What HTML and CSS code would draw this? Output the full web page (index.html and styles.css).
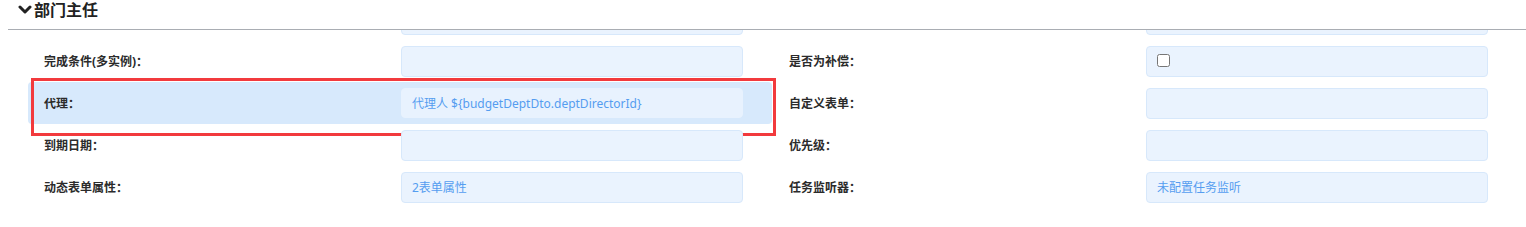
FILE: index.html
```html
<!DOCTYPE html>
<html lang="zh-CN">
<head>
    <meta charset="UTF-8">
    <title>部门主任</title>
    <link rel="stylesheet" href="styles.css">
</head>
<body>

    <div class="panel">
        <div class="panel-title">
            <svg class="chevron" width="14" height="10" viewBox="0 0 14 10">
                <polyline points="2,2 7,7 12,2" fill="none" stroke="#222" stroke-width="3" stroke-linecap="round" stroke-linejoin="round"/>
            </svg>
            <span>部门主任</span>
        </div>

        <div class="panel-body">
            <div class="form-grid">
                <!-- row scrolled under the title -->
                <div class="field">
                    <label class="field-label"></label>
                    <div class="field-input"></div>
                </div>
                <div class="field">
                    <label class="field-label"></label>
                    <div class="field-input"></div>
                </div>

                <div class="field">
                    <label class="field-label">完成条件(多实例)<span class="colon">：</span></label>
                    <div class="field-input"></div>
                </div>
                <div class="field">
                    <label class="field-label">是否为补偿<span class="colon">：</span></label>
                    <div class="field-input check"><input type="checkbox"></div>
                </div>

                <div class="field active">
                    <label class="field-label">代理<span class="colon">：</span></label>
                    <div class="field-input">代理人 ${budgetDeptDto.deptDirectorId}</div>
                    <div class="mark"></div>
                </div>
                <div class="field">
                    <label class="field-label">自定义表单<span class="colon">：</span></label>
                    <div class="field-input"></div>
                </div>

                <div class="field">
                    <label class="field-label">到期日期<span class="colon">：</span></label>
                    <div class="field-input"></div>
                </div>
                <div class="field">
                    <label class="field-label">优先级<span class="colon">：</span></label>
                    <div class="field-input"></div>
                </div>

                <div class="field">
                    <label class="field-label">动态表单属性<span class="colon">：</span></label>
                    <div class="field-input">2表单属性</div>
                </div>
                <div class="field">
                    <label class="field-label">任务监听器<span class="colon">：</span></label>
                    <div class="field-input">未配置任务监听</div>
                </div>
            </div>
        </div>
    </div>

</body>
</html>
```

FILE: styles.css
```css
body {
    margin: 0;
    padding: 0;
    background: #fff;
    font-family: "Noto Sans", "Noto Sans CJK SC", sans-serif;
    color: #333;
    overflow: hidden;
}
.panel-title {
    display: flex;
    align-items: flex-start;
    height: 29px;
    margin-left: 8px;
    padding-left: 10px;
    border-bottom: 1px solid #a9adb3;
    font-size: 16px;
    font-weight: bold;
    line-height: 20px;
    color: #222;
}
.chevron {
    margin: 5px 2px 0 0;
}
.panel-body {
    height: 197px;
    overflow: hidden;
}
.form-grid {
    display: grid;
    grid-template-columns: 744px 744px;
    column-gap: 1px;
    padding-left: 28px;
    margin-top: -32px;
}
.field {
    position: relative;
    display: flex;
    align-items: center;
    height: 42px;
    padding-left: 16px;
    border-radius: 4px;
}
.field-label {
    width: 357px;
    flex-shrink: 0;
    font-size: 12px;
    font-weight: bold;
    color: #2b2b2b;
}
/* fullwidth colon sits centred in its box, as in YaHei */
.colon {
    display: inline-block;
    width: 12px;
    text-align: center;
    font-family: "Noto Sans", sans-serif;
}
.field-input {
    box-sizing: border-box;
    display: flex;
    align-items: center;
    width: 342px;
    height: 31px;
    padding: 0 10px;
    background: #eaf3fe;
    border: 1px solid #d7e8fb;
    border-radius: 4px;
    font-size: 12px;
    color: #559df0;
}
.field-input.check {
    align-items: flex-start;
    padding-top: 7px;
}
.field-input.check input {
    width: 13px;
    height: 13px;
    margin: 0;
}
.field.active {
    background: #d7e9fc;
}
.field.active .field-input {
    height: 30px;
    background: #e8f2fe;
    border-color: #e8f2fe;
}
.mark {
    position: absolute;
    left: 3px;
    top: -4px;
    width: 745px;
    height: 58px;
    box-sizing: border-box;
    border: 3px solid #f23a3d;
    pointer-events: none;
}
```
